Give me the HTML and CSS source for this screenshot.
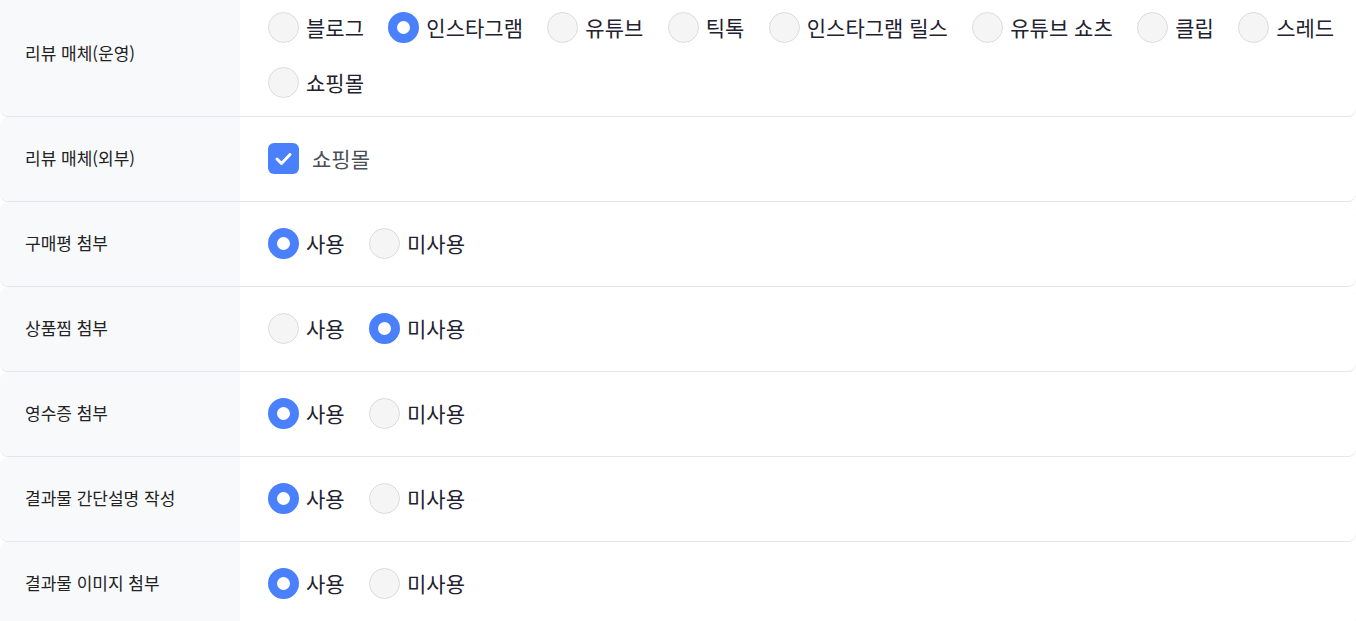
FILE: index.html
```html
<!DOCTYPE html>
<html lang="ko">
<head>
  <meta charset="UTF-8" />
  <meta name="viewport" content="width=device-width, initial-scale=1.0"/>
  <title>리뷰 설정</title>
  <link rel="stylesheet" href="styles.css">
</head>
<body>
  <div class="Form">
    <div class="Row tall">
      <div class="Label">리뷰 매체(운영)</div>
      <div class="Options">
        <label class="opt"><input type="radio" name="media"> 블로그</label>
        <label class="opt"><input type="radio" name="media" checked> 인스타그램</label>
        <label class="opt"><input type="radio" name="media"> 유튜브</label>
        <label class="opt"><input type="radio" name="media"> 틱톡</label>
        <label class="opt"><input type="radio" name="media"> 인스타그램 릴스</label>
        <label class="opt"><input type="radio" name="media"> 유튜브 쇼츠</label>
        <label class="opt"><input type="radio" name="media"> 클립</label>
        <label class="opt"><input type="radio" name="media"> 스레드</label>
        <label class="opt"><input type="radio" name="media"> 쇼핑몰</label>
      </div>
    </div>

    <div class="Row">
      <div class="Label">리뷰 매체(외부)</div>
      <div class="Options">
        <label class="opt check"><input type="checkbox" checked> 쇼핑몰</label>
      </div>
    </div>

    <div class="Row">
      <div class="Label">구매평 첨부</div>
      <div class="Options">
        <label class="opt"><input type="radio" name="buy" checked> 사용</label>
        <label class="opt"><input type="radio" name="buy"> 미사용</label>
      </div>
    </div>

    <div class="Row">
      <div class="Label">상품찜 첨부</div>
      <div class="Options">
        <label class="opt"><input type="radio" name="wish"> 사용</label>
        <label class="opt"><input type="radio" name="wish" checked> 미사용</label>
      </div>
    </div>

    <div class="Row">
      <div class="Label">영수증 첨부</div>
      <div class="Options">
        <label class="opt"><input type="radio" name="receipt" checked> 사용</label>
        <label class="opt"><input type="radio" name="receipt"> 미사용</label>
      </div>
    </div>

    <div class="Row">
      <div class="Label">결과물 간단설명 작성</div>
      <div class="Options">
        <label class="opt"><input type="radio" name="desc" checked> 사용</label>
        <label class="opt"><input type="radio" name="desc"> 미사용</label>
      </div>
    </div>

    <div class="Row">
      <div class="Label">결과물 이미지 첨부</div>
      <div class="Options">
        <label class="opt"><input type="radio" name="image" checked> 사용</label>
        <label class="opt"><input type="radio" name="image"> 미사용</label>
      </div>
    </div>
  </div>
</body>
</html>
```

FILE: styles.css
```css
* {
  margin: 0;
  padding: 0;
  box-sizing: border-box;
}

body {
  font-family: "Noto Sans CJK KR", "Noto Sans", sans-serif;
  background: #fff;
  color: #222;
}

.Form {
  display: flex;
  flex-direction: column;
  gap: 1px;
}

.Row {
  display: flex;
  min-height: 84px;
  background: #fff;
  border-radius: 8px;
  box-shadow: 0 1px 0 #e4e6e9;
  overflow: hidden;
}

/* first row is scrolled a little past the top */
.Row.tall {
  min-height: 124px;
  margin-top: -8px;
}

.Row.tall .Options {
  padding-top: 2px;
}

.Label {
  width: 240px;
  flex-shrink: 0;
  background: #f8f9fb;
  padding: 0 0 3px 25px;
  display: flex;
  align-items: center;
  font-size: 17px;
  color: #222;
}

.Options {
  flex: 1;
  display: flex;
  flex-wrap: wrap;
  align-items: center;
  align-content: center;
  column-gap: 24.4px;
  row-gap: 24px;
  padding: 0 20px 1px 28px;
}

.opt {
  display: flex;
  align-items: center;
  gap: 7px;
  font-size: 21px;
  line-height: 31px;
  color: #1f2230;
  cursor: pointer;
}

.opt input {
  appearance: none;
  width: 31px;
  height: 31px;
  border-radius: 50%;
  background: #f5f5f5;
  border: 1px solid #dcdcdc;
  cursor: pointer;
}

.opt input:checked {
  background: #fff;
  border: 9px solid #4a80fb;
}

.opt.check {
  gap: 13px;
  color: #4a4f57;
}

.opt.check input {
  border-radius: 6px;
  background: #f5f5f5;
}

.opt.check input:checked {
  border: none;
  background: #4a80fb url("data:image/svg+xml;utf8,<svg xmlns='http://www.w3.org/2000/svg' viewBox='0 0 31 31'><path d='M9 16l4.5 4.5L22 11.5' fill='none' stroke='white' stroke-width='3' stroke-linecap='round' stroke-linejoin='round'/></svg>") center / 31px 31px no-repeat;
}
```
